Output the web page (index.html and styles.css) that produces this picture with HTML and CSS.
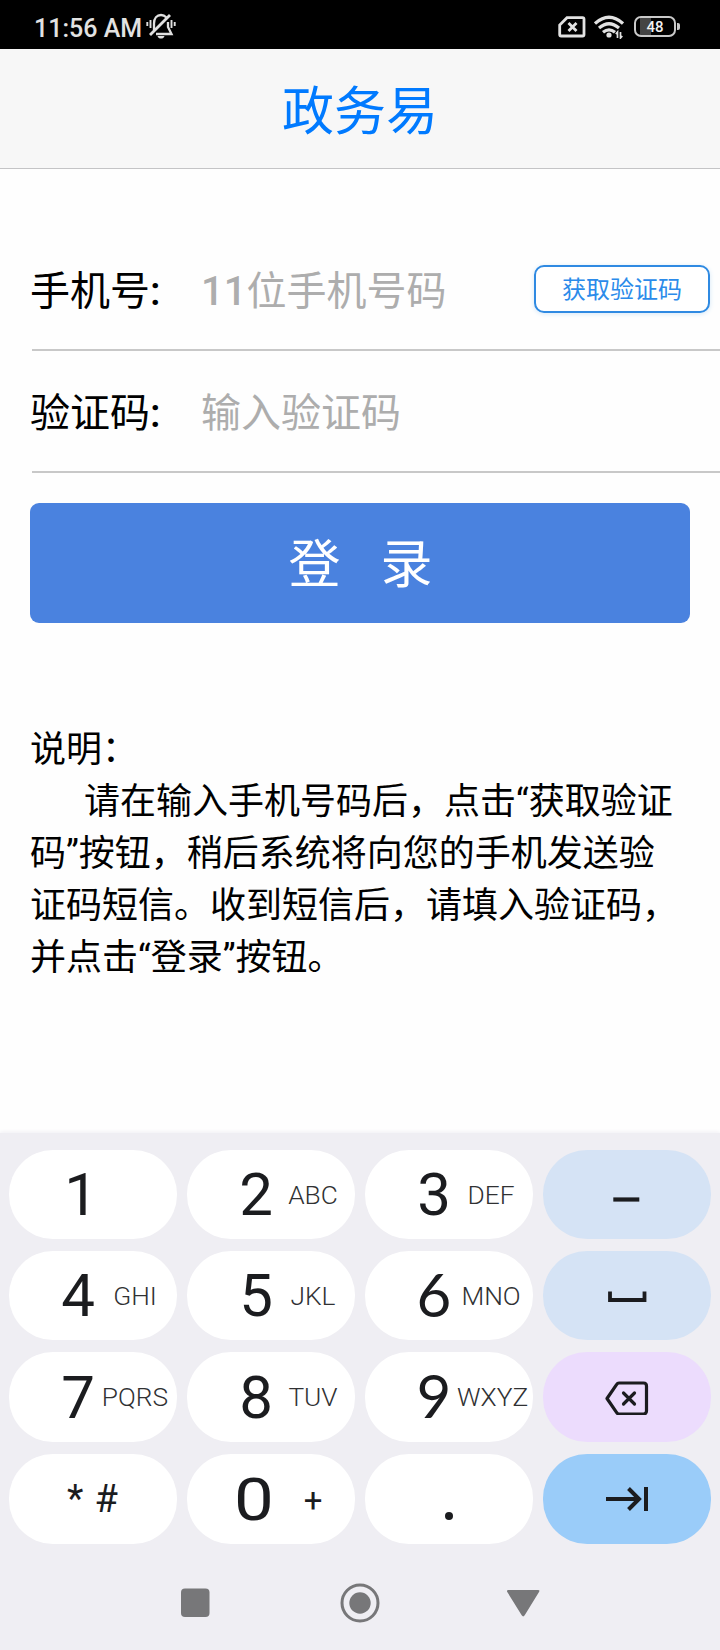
FILE: index.html
```html
<!DOCTYPE html>
<html lang="zh-CN">
<head>
<meta charset="utf-8">
<title>政务易</title>
<link rel="stylesheet" href="styles.css">
</head>
<body>
<div class="status">
  <span class="time">11:56 AM</span>
  <svg class="bell" width="30" height="26" viewBox="0 0 30 26" fill="none" stroke="#e0e0e0" stroke-width="2.300">
    <path d="M8 17V10.500C8 5 11 2 15 2C17 2 19 3 20.500 4.500M22 9V14L25.500 21H10"/>
    <path d="M4 22L24 2" stroke-width="2.800"/>
    <path d="M11.500 23H18.500C18 25 16.500 25.600 15 25.600C13.500 25.600 12 25 11.500 23Z" fill="#e0e0e0" stroke="none"/>
    <path d="M4.500 7V15M1.300 9V13M25.500 7V15M28.700 9V13" stroke-width="1.900"/>
  </svg>
  <div class="status-icons">
    <svg width="28" height="22" viewBox="0 0 28 22" fill="none" stroke="#e2e2e2" stroke-width="2.800">
      <path d="M9 1.700H24.500Q26 1.700 26 3.200V18.500Q26 20 24.500 20H3.200Q1.700 20 1.700 18.500V9Z"/>
      <path d="M10.500 7L18.500 15M18.500 7L10.500 15"/>
    </svg>
    <svg class="wifi" width="30" height="24" viewBox="0 0 30 24" fill="none" stroke="#e2e2e2" stroke-width="3.200">
      <path d="M1 8.500Q15 -4 29 8.500"/>
      <path d="M5 13Q15 4.500 25 13"/>
      <path d="M9 17.300Q15 12.300 21 17.300"/>
      <circle cx="15" cy="20" r="2.600" fill="#e2e2e2" stroke="none"/>
      <path d="M23.500 23V17L21.800 19M26.500 17V23L28.300 21" stroke-width="1.700"/>
    </svg>
    <div class="battery"><span>48</span></div>
    <i class="battery-tip"></i>
  </div>
</div>

<header class="header">政务易</header>

<main class="content">
  <div class="row">
    <label>手机号<b>:</b></label>
    <span class="hint"><b>11</b>位手机号码</span>
    <button class="code">获取验证码</button>
  </div>
  <div class="row">
    <label>验证码<b>:</b></label>
    <span class="hint">输入验证码</span>
  </div>
  <button class="login"><span>登</span><span>录</span></button>
  <section class="note">
    <p>说明：</p>
    <p class="first">请在输入手机号码后，点击“获取验证</p>
    <p>码”按钮，稍后系统将向您的手机发送验</p>
    <p>证码短信。收到短信后，请填入验证码，</p>
    <p>并点击“登录”按钮。</p>
  </section>
</main>

<div class="keyboard">
  <div class="keys">
    <div class="key one"><span class="num">1</span></div>
    <div class="key"><span class="num">2</span><span class="sub">ABC</span></div>
    <div class="key"><span class="num">3</span><span class="sub">DEF</span></div>
    <div class="key pale"><svg width="44" height="36" viewBox="0 0 44 36"><path d="M8.300 22.500H34.300" stroke="#1b1c1f" stroke-width="4.200"/></svg></div>

    <div class="key"><span class="num">4</span><span class="sub">GHI</span></div>
    <div class="key"><span class="num">5</span><span class="sub">JKL</span></div>
    <div class="key"><span class="num round">6</span><span class="sub">MNO</span></div>
    <div class="key pale"><svg width="44" height="36" viewBox="0 0 44 36"><path d="M5 13.500V22H39.500V13.500" fill="none" stroke="#1b1c1f" stroke-width="3.800"/></svg></div>

    <div class="key"><span class="num">7</span><span class="sub">PQRS</span></div>
    <div class="key"><span class="num">8</span><span class="sub">TUV</span></div>
    <div class="key"><span class="num round">9</span><span class="sub">WXYZ</span></div>
    <div class="key lilac"><svg width="44" height="36" viewBox="0 0 44 36" fill="none" stroke="#1b1c1f" stroke-width="3.200" stroke-linejoin="round" stroke-linecap="round"><path d="M14 4H38.500Q41.500 4 41.500 7V32Q41.500 35 38.500 35H14Q12.500 35 11.700 33.700L2 19.500L11.700 5.300Q12.500 4 14 4Z"/><path d="M18.500 14L29.500 25M29.500 14L18.500 25"/></svg></div>

    <div class="key symbols"><span class="star">*</span><span class="hash">#</span></div>
    <div class="key"><span class="num zero">0</span><span class="sub plus">+</span></div>
    <div class="key dotkey"><i class="dot"></i></div>
    <div class="key blue"><svg width="44" height="36" viewBox="0 0 44 36" fill="none" stroke="#1b1c1f" stroke-width="4"><path d="M1 18H34M23.500 7.500L34 18L23.500 28.500M41 6V30"/></svg></div>
  </div>
  <nav class="nav">
    <svg width="360" height="42" viewBox="0 0 360 42" fill="#777779">
      <rect x="1" y="6.500" width="28.500" height="28.500" rx="4"/>
      <circle cx="180" cy="21" r="10.700"/>
      <circle cx="180" cy="21" r="18" fill="none" stroke="#777779" stroke-width="3"/>
      <path d="M328.500 8H358Q360.300 8 359 10L344.700 33.300Q343.200 35.500 341.700 33.300L327.300 10Q326.200 8 328.500 8Z"/>
    </svg>
  </nav>
</div>
</body>
</html>
```
FILE: styles.css
```css
* { box-sizing: border-box; }
body {
  margin: 0;
  width: 720px;
  height: 1650px;
  overflow: hidden;
  display: flex;
  flex-direction: column;
  background: #fefefe;
  color: #000;
  font-family: Roboto, "Noto Sans CJK SC", sans-serif;
}
button { font-family: inherit; padding: 0; }
svg { display: block; flex: none; }

.status {
  height: 49px;
  flex: none;
  display: flex;
  align-items: center;
  padding: 7px 40px 0 34px;
  background: #000;
  color: #e2e2e2;
}
.time { font-size: 25px; font-weight: 500; line-height: 30px; width: 112px; padding-top: 2px; white-space: nowrap; }
.bell { margin-bottom: 4px; }
.status-icons { margin-left: auto; display: flex; align-items: center; padding-bottom: 3px; }
.wifi { margin-left: 8px; }
.battery {
  margin-left: 10px;
  width: 42px;
  height: 21px;
  border: 2px solid #c9c9c9;
  border-radius: 7px;
  background: linear-gradient(90deg, #000 4px, #444 4px, #444 15px, #000 15px);
  display: flex;
  align-items: center;
  justify-content: center;
  color: #f2f2f2;
  font-size: 15px;
  font-weight: 500;
}
.battery-tip { width: 3px; height: 7px; margin-left: 1px; border-radius: 0 2px 2px 0; background: #c9c9c9; }

.header {
  height: 120px;
  flex: none;
  display: flex;
  align-items: center;
  justify-content: center;
  padding-bottom: 2px;
  background: #f7f7f7;
  border-bottom: 1px solid #c4c4c6;
  color: #007aff;
  font-size: 52px;
}

.content { height: 964px; flex: none; padding-top: 60px; }
.row {
  height: 122px;
  margin-left: 32px;
  padding-right: 10px;
  display: flex;
  align-items: center;
  border-bottom: 2px solid #c8c8c8;
  font-size: 40px;
}
.row label { width: 171px; margin-left: -2px; padding-bottom: 2px; white-space: nowrap; }
.row b { font-weight: 500; }
.hint { color: #adadad; padding-bottom: 2px; white-space: nowrap; }
.code {
  width: 176px;
  height: 48px;
  margin: 0 0 0 auto;
  padding-bottom: 3px;
  border: 2px solid #2f8ae2;
  border-radius: 10px;
  background: #fff;
  box-shadow: 0 1px 5px #d5e8f8;
  color: #2b8bea;
  font-size: 24px;
}
.login {
  display: flex;
  align-items: center;
  justify-content: center;
  gap: 40px;
  width: 660px;
  height: 120px;
  margin: 30px 0 0 30px;
  padding: 0 0 5px 1px;
  border: 0;
  border-radius: 9px;
  background: #4a82df;
  color: #fff;
  font-size: 52px;
}
.note { margin: 101px 0 0 30px; font-size: 36px; line-height: 52px; white-space: nowrap; }
.note p { margin: 0; }
.note .first { padding-left: 54px; }

.keyboard {
  height: 517px;
  flex: none;
  padding: 17px 9px 0;
  background: #efeef3;
  box-shadow: 0 -1px 4px #efeef3;
}
.keys {
  display: grid;
  grid-template-columns: repeat(4, 168px);
  grid-template-rows: 89px 89px 90px 90px;
  gap: 12px 10px;
}
.key {
  display: flex;
  align-items: center;
  padding-left: 46px;
  border-radius: 44px;
  background: #fff;
  color: #1b1c1f;
}
.one { padding-left: 49px; }
.num { width: 46px; flex: none; padding-top: 1px; text-align: center; font-size: 60px; line-height: 70px; }
.round { padding: 0 0 4px; font-family: Lato, Roboto, sans-serif; }
.sub { width: 68px; flex: none; text-align: center; font-size: 26.300px; font-weight: 300; color: #303133; }
.zero { transform: translateX(-2px) scaleX(1.180); }
.plus { padding-top: 2px; font-size: 33px; font-weight: 400; color: #1b1c1f; }
.pale, .lilac, .blue { justify-content: center; padding: 0; }
.pale { background: #d5e3f5; }
.lilac { background: #ecdcfd; }
.blue { background: #9accf9; }
.symbols { gap: 11px; padding-left: 58px; font-size: 38px; }
.dotkey { padding: 34px 0 0 80px; }
.dot { width: 8px; height: 8px; border-radius: 50%; background: #1b1c1f; }
.nav { display: flex; justify-content: center; padding-top: 38px; }
```
